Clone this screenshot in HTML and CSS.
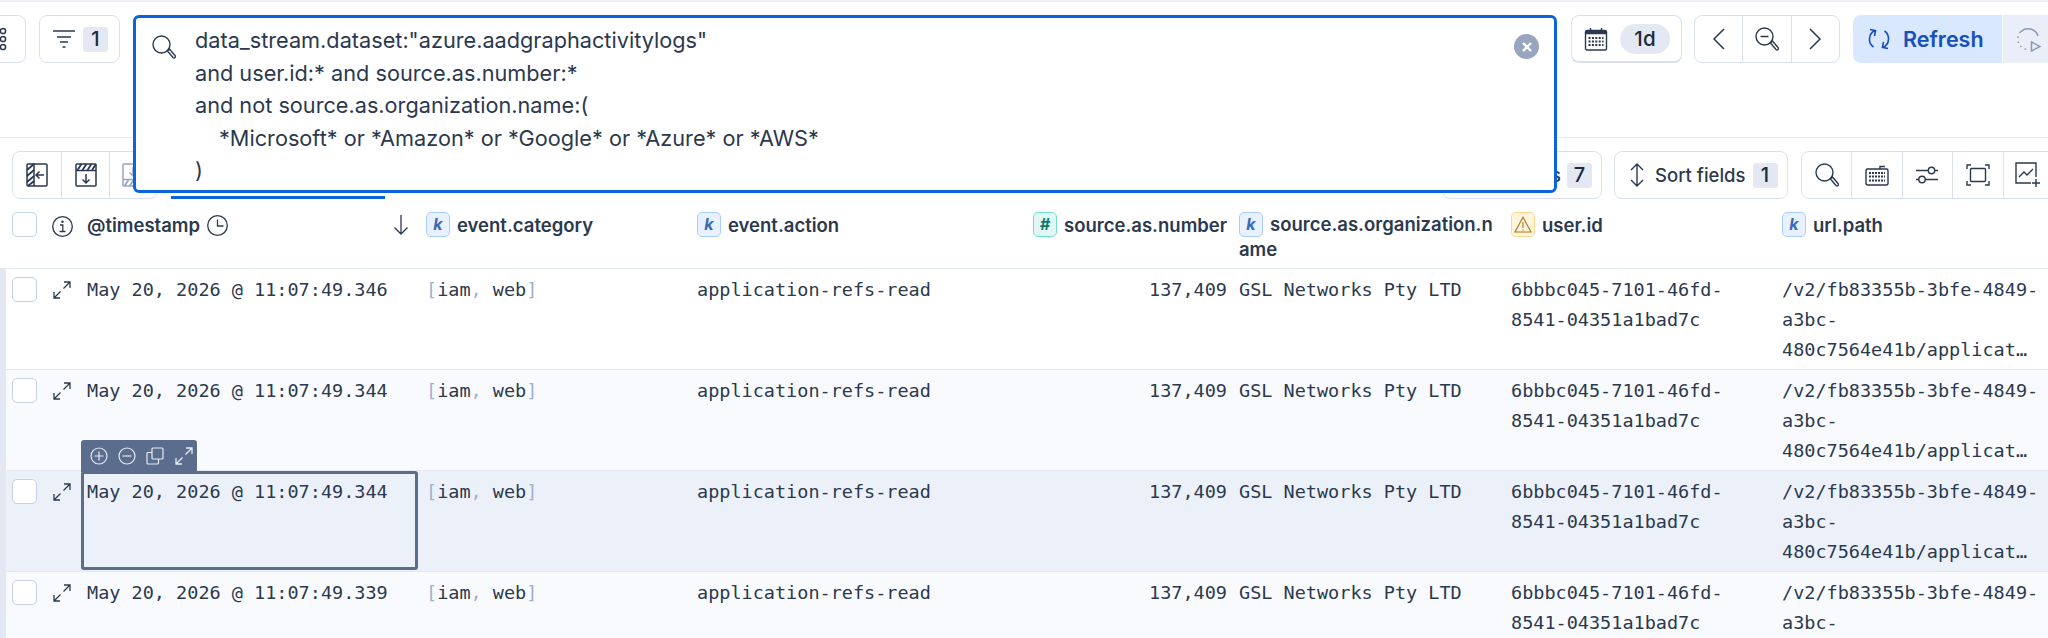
FILE: index.html
```html
<!DOCTYPE html>
<html lang="en">
<head>
    <meta charset="UTF-8">
    <title>Discover</title>
    <link rel="stylesheet" href="styles.css">
</head>
<body>
    <svg class="defs" width="0" height="0">
        <symbol id="expand" viewBox="0 0 18 18"><path d="M11 1h6v6M17 1l-6.500 6.500M1 11v6h6M1 17l6.500-6.500" fill="none" stroke="currentColor" stroke-width="1.3"/></symbol>
        <symbol id="search" viewBox="0 0 24 24"><circle cx="9.5" cy="9.5" r="8.500" fill="none" stroke="#2b394f" stroke-width="1.4"/><path d="m15.500 16 2-2 5.500 6.500a1.300 1.300 0 0 1-2 2z" fill="none" stroke="#2b394f" stroke-width="1.4"/></symbol>
    </svg>

    <div class="top-strip"></div>

    <div class="topbar">
        <div class="btn btn-group-cut">
            <svg width="12" height="26" viewBox="0 0 12 26" fill="none" stroke="#2b394f" stroke-width="1.5"><circle cx="3" cy="5" r="2.6"/><circle cx="3" cy="13" r="2.6"/><circle cx="3" cy="21" r="2.6"/></svg>
        </div>
        <div class="btn btn-filter">
            <svg width="22" height="20" viewBox="0 0 22 20" fill="none" stroke="#2b394f" stroke-width="1.4"><path d="M0 2h22M4 8h14M7 13h8M9.500 18h3"/></svg>
            <span class="count count-lg">1</span>
        </div>
        <div class="query-slot">
            <div class="query">
                <svg class="query-icon" width="24" height="24"><use href="#search"/></svg>
                <div class="query-text">
                    <div>data_stream.dataset:"azure.aadgraphactivitylogs"</div>
                    <div>and user.id:* and source.as.number:*</div>
                    <div>and not source.as.organization.name:(</div>
                    <div class="indent">*Microsoft* or *Amazon* or *Google* or *Azure* or *AWS*</div>
                    <div>)</div>
                </div>
                <span class="clear">
                    <svg width="12" height="12" viewBox="0 0 12 12" stroke="#fff" stroke-width="2.4"><path d="m2 2 8 8M10 2l-8 8"/></svg>
                </span>
            </div>
        </div>
        <div class="btn btn-date">
            <svg width="24" height="24" viewBox="0 0 24 24" fill="none" stroke="#2b394f" stroke-width="1.4"><rect x="1.500" y="3.500" width="21" height="19.500" rx="1.500"/><path d="M1.500 5.500h21" stroke-width="3.5"/><path d="M6.500 1v4M17.500 1v4"/><path d="M4.500 11h15M4.500 14.500h15M4.500 18h15" stroke-width="1.9" stroke-dasharray="2 1.4"/></svg>
            <span class="pill">1d</span>
        </div>
        <div class="btn-group nav-group">
            <span class="cell"><svg width="14" height="24" viewBox="0 0 14 24" fill="none" stroke="#2b394f" stroke-width="1.5"><path d="M12 2 2 12l10 10"/></svg></span>
            <span class="cell"><svg width="24" height="24" viewBox="0 0 24 24" fill="none" stroke="#2b394f" stroke-width="1.4"><circle cx="9.500" cy="9.500" r="8.500"/><path d="M5.500 9.500h8M15.500 16l2-2 5.500 6.500a1.300 1.300 0 0 1-2 2z"/></svg></span>
            <span class="cell"><svg width="14" height="24" viewBox="0 0 14 24" fill="none" stroke="#2b394f" stroke-width="1.5"><path d="m2 2 10 10L2 22"/></svg></span>
        </div>
        <div class="refresh">
            <div class="refresh-main">
                <svg width="22" height="22" viewBox="0 0 22 22" fill="none" stroke="#1750ba" stroke-width="1.6"><path d="M7 2.600A9.500 9.500 0 0 0 5.500 19M2 1.500l5.500 1.200L6.500 8"/><path d="M15 19.400A9.500 9.500 0 0 0 16.500 3M20 20.500l-5.500-1.200 1-5.300"/></svg>
                <span>Refresh</span>
            </div>
            <div class="refresh-auto">
                <svg width="26" height="26" viewBox="0 0 26 26" fill="none" stroke="#8a9bb8" stroke-width="1.5"><path d="M5.500 6A10.500 10.500 0 0 1 23 10"/><path d="M5.500 6A10.500 10.500 0 0 0 14 23.500" stroke-dasharray="1.5 3.5"/><path d="M16.500 16l8.500 4.500-8.500 4.500z"/></svg>
            </div>
        </div>
    </div>

    <div class="toolbar">
        <div class="btn-group layout-group">
            <span class="cell"><svg width="22" height="24" viewBox="0 0 22 24" fill="none" stroke="#2b394f" stroke-width="1.5"><rect x="1" y="1" width="20" height="22" rx="1"/><path d="M8 1v22M18 12h-8M13.500 8.500 10 12l3.500 3.500"/><path d="M1 7l7-6M1 13 8 7M1 19 8 13M2 23l6-5" stroke-width="1.8"/></svg></span>
            <span class="cell"><svg width="22" height="24" viewBox="0 0 22 24" fill="none" stroke="#2b394f" stroke-width="1.5"><rect x="1" y="1" width="20" height="22" rx="1"/><path d="M1 7.500h20M11 11v9M7.500 16.500 11 20l3.500-3.500"/><path d="M2.500 7l4-6M7.500 7l4-6M12.500 7l4-6M17 7l4-6" stroke-width="1.8"/></svg></span>
            <span class="cell cell-muted"><svg width="22" height="24" viewBox="0 0 22 24" fill="none" stroke="#98a5bf" stroke-width="1.5"><rect x="1" y="1" width="20" height="22" rx="1"/><path d="M1 16.500h20M11 4v9M7.500 9.500 11 13l3.500-3.500"/><path d="M2.500 23l4-6M7.500 23l4-6M12.500 23l4-6M17 23l4-6" stroke-width="1.8"/></svg></span>
        </div>
        <div class="tab"></div>
        <div class="btn btn-text btn-columns">
            <span>Columns</span>
            <span class="count">7</span>
        </div>
        <div class="btn btn-text btn-sort">
            <svg width="16" height="26" viewBox="0 0 16 26" fill="none" stroke="#2b394f" stroke-width="1.4"><path d="M8 2v22M2 8l6-6 6 6M2 18l6 6 6-6"/></svg>
            <span>Sort fields</span>
            <span class="count">1</span>
        </div>
        <div class="btn-group tools-group">
            <span class="cell"><svg width="24" height="24"><use href="#search"/></svg></span>
            <span class="cell"><svg width="24" height="22" viewBox="0 0 24 22" fill="none" stroke="#2b394f" stroke-width="1.4"><rect x="1" y="5" width="22" height="16" rx="1.500"/><path d="M4 9h16M4 12.500h16M4 16.500h16" stroke-width="2.2" stroke-dasharray="2 1"/><path d="M15 5V2.500h5"/></svg></span>
            <span class="cell"><svg width="24" height="20" viewBox="0 0 24 20" fill="none" stroke="#2b394f" stroke-width="1.4"><path d="M1 5.500h12M20 5.500h3M1 14.500h3M10 14.500h13"/><circle cx="16.500" cy="5.500" r="3.200"/><circle cx="7" cy="14.500" r="3.200"/></svg></span>
            <span class="cell"><svg width="24" height="22" viewBox="0 0 24 22" fill="none" stroke="#2b394f" stroke-width="1.4"><path d="M5 1H1v4M19 1h4v4M5 21H1v-4M19 21h4v-4"/><rect x="4.500" y="4.500" width="15" height="13" rx="1"/></svg></span>
            <span class="cell"><svg width="26" height="26" viewBox="0 0 26 26" fill="none" stroke="#2b394f" stroke-width="1.4"><path d="M16 21H1V1h20v14"/><path d="m4 15 5-5 3 3 6-6"/><path d="M21 17v8M17 21h8"/></svg></span>
        </div>
    </div>

    <div class="grid-head">
        <div class="h-check"><span class="checkbox"></span></div>
        <div class="h-info"><svg width="21" height="21" viewBox="0 0 21 21" fill="none" stroke="#2b394f" stroke-width="1.3"><circle cx="10.500" cy="10.500" r="9.800"/><path d="M8 9h2.800v6M7.500 15.500h6"/><circle cx="10.500" cy="5.800" r=".6"/></svg></div>
        <div class="h-cell h-time">
            <span>@timestamp</span>
            <svg width="21" height="21" viewBox="0 0 21 21" fill="none" stroke="#2b394f" stroke-width="1.3"><circle cx="10.500" cy="10.500" r="9.800"/><path d="M10.500 4.500v6.500h6"/></svg>
            <svg class="sort-arrow" width="16" height="21" viewBox="0 0 16 21" fill="none" stroke="#2b394f" stroke-width="1.3"><path d="M8 1v19M1.500 13.500 8 20l6.500-6.500"/></svg>
        </div>
        <div class="h-cell"><i class="tk tk-k">k</i><span>event.category</span></div>
        <div class="h-cell"><i class="tk tk-k">k</i><span>event.action</span></div>
        <div class="h-cell"><i class="tk tk-n">#</i><span>source.as.number</span></div>
        <div class="h-cell h-wrap"><i class="tk tk-k">k</i>source.as.organization.name</div>
        <div class="h-cell"><i class="tk tk-w"><svg width="18" height="17" viewBox="0 0 18 17" fill="none" stroke="#a87920" stroke-width="1.1"><path d="M9 1.200 17 16H1z"/><path d="M9 6v6M9 13.300v1.200"/></svg></i><span>user.id</span></div>
        <div class="h-cell"><i class="tk tk-k">k</i><span>url.path</span></div>
    </div>

    <div class="grid-body">
        <div class="row">
            <div class="c-check"><span class="checkbox"></span></div>
            <div class="c-expand"><svg width="18" height="18"><use href="#expand"/></svg></div>
            <div class="cell-txt">May 20, 2026 @ 11:07:49.346</div>
            <div class="cell-txt"><b>[</b>iam<b>,</b> web<b>]</b></div>
            <div class="cell-txt">application-refs-read</div>
            <div class="cell-txt num">137,409</div>
            <div class="cell-txt">GSL Networks Pty LTD</div>
            <div class="cell-txt">6bbbc045-7101-46fd-<br>8541-04351a1bad7c</div>
            <div class="cell-txt">/v2/fb83355b-3bfe-4849-<br>a3bc-<br>480c7564e41b/applicat…</div>
        </div>
        <div class="row striped">
            <div class="c-check"><span class="checkbox"></span></div>
            <div class="c-expand"><svg width="18" height="18"><use href="#expand"/></svg></div>
            <div class="cell-txt">May 20, 2026 @ 11:07:49.344</div>
            <div class="cell-txt"><b>[</b>iam<b>,</b> web<b>]</b></div>
            <div class="cell-txt">application-refs-read</div>
            <div class="cell-txt num">137,409</div>
            <div class="cell-txt">GSL Networks Pty LTD</div>
            <div class="cell-txt">6bbbc045-7101-46fd-<br>8541-04351a1bad7c</div>
            <div class="cell-txt">/v2/fb83355b-3bfe-4849-<br>a3bc-<br>480c7564e41b/applicat…</div>
        </div>
        <div class="row hovered">
            <div class="c-check"><span class="checkbox"></span></div>
            <div class="c-expand"><svg width="18" height="18"><use href="#expand"/></svg></div>
            <div class="cell-txt focused">
                May 20, 2026 @ 11:07:49.344
                <div class="cell-pop">
                    <svg width="20" height="20" viewBox="0 0 20 20" fill="none" stroke="#e6ebf5" stroke-width="1.2"><circle cx="10" cy="10" r="8"/><path d="M10 5.500v9M5.500 10h9"/></svg>
                    <svg width="20" height="20" viewBox="0 0 20 20" fill="none" stroke="#e6ebf5" stroke-width="1.2"><circle cx="10" cy="10" r="8"/><path d="M5.500 10h9"/></svg>
                    <svg width="20" height="20" viewBox="0 0 20 20" fill="none" stroke="#e6ebf5" stroke-width="1.2"><rect x="7" y="2" width="11" height="11" rx="1"/><path d="M7 6.500H3a1 1 0 0 0-1 1V17a1 1 0 0 0 1 1h9.500a1 1 0 0 0 1-1v-4"/></svg>
                    <svg class="pop-expand" width="18" height="18"><use href="#expand"/></svg>
                </div>
            </div>
            <div class="cell-txt"><b>[</b>iam<b>,</b> web<b>]</b></div>
            <div class="cell-txt">application-refs-read</div>
            <div class="cell-txt num">137,409</div>
            <div class="cell-txt">GSL Networks Pty LTD</div>
            <div class="cell-txt">6bbbc045-7101-46fd-<br>8541-04351a1bad7c</div>
            <div class="cell-txt">/v2/fb83355b-3bfe-4849-<br>a3bc-<br>480c7564e41b/applicat…</div>
        </div>
        <div class="row striped">
            <div class="c-check"><span class="checkbox"></span></div>
            <div class="c-expand"><svg width="18" height="18"><use href="#expand"/></svg></div>
            <div class="cell-txt">May 20, 2026 @ 11:07:49.339</div>
            <div class="cell-txt"><b>[</b>iam<b>,</b> web<b>]</b></div>
            <div class="cell-txt">application-refs-read</div>
            <div class="cell-txt num">137,409</div>
            <div class="cell-txt">GSL Networks Pty LTD</div>
            <div class="cell-txt">6bbbc045-7101-46fd-<br>8541-04351a1bad7c</div>
            <div class="cell-txt">/v2/fb83355b-3bfe-4849-<br>a3bc-</div>
        </div>
    </div>
</body>
</html>
```

FILE: styles.css
```css
html, body { margin: 0; padding: 0; height: 638px; overflow: hidden; }
body { font-family: 'Inter', 'Liberation Sans', sans-serif; font-size: 18.5px; color: #1d2a3e; background: white; }
.defs { position: absolute; }
.top-strip { height: 2px; background: #eef1f8; }

/* top bar */
.topbar { display: flex; gap: 13px; height: 48px; margin: 13px -40px 0 -30px; }
.btn { display: flex; align-items: center; box-sizing: border-box; height: 48px; background: white; border: 1px solid #d9e0ed; border-radius: 8px; flex: none; }
.btn-group-cut { width: 56px; justify-content: flex-end; padding-right: 13px; }
.btn-filter { width: 81px; padding-left: 13px; gap: 8px; }
.count { display: inline-block; box-sizing: border-box; width: 25px; height: 25px; line-height: 25px; text-align: center; background: #e3e8f2; border-radius: 3px; font-weight: 500; font-size: 20px; color: #1d2a3e; }
.query-slot { flex: 1; position: relative; min-width: 0; margin-right: 1px; }
.query { position: absolute; z-index: 5; left: 0; right: 0; top: 0; height: 178px; box-sizing: border-box; background: white; border: 3px solid #0b64dd; border-radius: 6px; }
.query-icon { position: absolute; left: 16px; top: 17px; }
.query-text { position: absolute; left: 59px; top: 6px; font-size: 21.7px; line-height: 32.6px; color: #2b394f; white-space: nowrap; }
.indent { padding-left: 24px; }
.clear { position: absolute; right: 15px; top: 16px; width: 25px; height: 25px; border-radius: 50%; background: #98a5bf; display: flex; align-items: center; justify-content: center; }
.btn-date { width: 111px; padding-left: 12px; gap: 12px; border-bottom-width: 2px; }
.pill { display: inline-block; width: 50px; height: 30px; line-height: 30px; text-align: center; border-radius: 15px; background: #e3e8f2; font-weight: 500; font-size: 20.6px; }

.btn-group { display: flex; box-sizing: border-box; height: 48px; border: 1px solid #d9e0ed; border-radius: 8px; flex: none; background: white; }
.btn-group .cell { display: flex; align-items: center; justify-content: center; border-left: 1px solid #d9e0ed; box-sizing: border-box; flex: 1 1 0; }
.btn-group .cell:first-child { border-left: none; }
.nav-group { width: 146px; margin-left: -1px; }

.refresh { display: flex; flex: none; width: 235px; height: 48px; border-radius: 8px; overflow: hidden; }
.refresh-main { width: 149px; display: flex; align-items: center; gap: 13px; padding-left: 15px; box-sizing: border-box; background: #d9e8ff; color: #1750ba; font-weight: 600; font-size: 21.5px; }
.refresh-auto { flex: 1; background: #e9eef8; border-left: 1px solid #f8fafd; padding: 11px 0 0 12px; }

/* second bar */
.toolbar { display: flex; height: 48px; margin: 74px -40px 0 0; padding: 13px 0 0 12px; border-top: 1px solid #e3e8f2; position: relative; align-items: stretch; }
.layout-group { width: 146px; }
.layout-group .cell { flex: 0 0 48px; }
.btn-group .cell-muted { justify-content: flex-start; padding-left: 12px; }
.tab { align-self: flex-end; width: 214px; height: 3px; margin-left: 13px; background: #0b64dd; }
.btn-text { gap: 10px; color: #2b394f; font-weight: 500; }
.btn-columns { margin-left: auto; width: 160px; justify-content: flex-end; padding-right: 9px; gap: 6px; }
.btn-sort { width: 174px; margin-left: 12px; padding-left: 14px; }
.btn-sort .count { margin-left: -3px; }
.tools-group { width: 287px; margin-left: 13px; }
.tools-group .cell { flex: none; width: 50.5px; }
.tools-group .cell:first-child { width: 49px; }

/* grid */
.grid-head, .row { display: grid; grid-template-columns: 44px 37px 339px 271px 336px 206px 272px 271px 272px; }
.grid-head { height: 70px; box-sizing: border-box; padding-top: 13px; border-bottom: 1px solid #e3e8f2; font-weight: 600; color: #2b394f; line-height: 25px; }
.h-check, .c-check { padding-left: 12px; }
.h-info { padding: 4px 0 0 8px; }
.h-cell { display: flex; gap: 7px; padding-left: 6px; min-width: 0; }
.h-cell > span { margin-top: 1px; }
.h-time { position: relative; }
.h-time svg { margin-top: 3px; }
.h-time .sort-arrow { position: absolute; left: 312px; top: 2px; margin: 0; }
.h-wrap { display: block; word-break: break-all; padding-right: 6px; }
.h-wrap .tk { margin-right: 7px; vertical-align: top; }

.checkbox { display: block; box-sizing: border-box; width: 25px; height: 25px; background: white; border: 1px solid #c5d0e4; border-radius: 5px; }
.tk { display: inline-flex; align-items: center; justify-content: center; box-sizing: border-box; width: 24px; height: 25px; flex: none; border-radius: 5px; border: 1px solid; font-size: 16px; font-weight: 700; font-style: italic; }
.tk-k { background: #e8f1ff; border-color: #a9cdff; color: #3a6bb5; }
.tk-n { background: #e0f7f4; border-color: #6fe0d3; color: #11786f; }
.tk-w { background: #fff4dc; border-color: #fbd78c; }

.grid-body { border-left: 6px solid #e3e8f2; }
.row { height: 101px; box-sizing: border-box; margin-left: -6px; border-bottom: 1px solid #e3e8f2; background: white; position: relative; box-shadow: inset 6px 0 0 #e3e8f2; }
.row.striped { background: #f8fafd; }
.row.hovered { background: #ecf1f9; }
.c-check { padding-top: 8px; }
.c-expand { padding: 12px 0 0 9px; color: #2b394f; }
.cell-txt { padding: 6px 6px 0; font-family: 'DejaVu Sans Mono', 'Liberation Mono', monospace; font-size: 18.5px; line-height: 30px; color: #2b394f; min-width: 0; white-space: nowrap; }
.cell-txt b { font-weight: 400; color: #a0b0cf; }
.num { text-align: right; }

.focused { position: relative; }
.focused::after { content: ""; position: absolute; left: 0; top: 0; width: 337px; height: 99px; box-sizing: border-box; border: 3px solid #5a6d8c; border-radius: 3px; }
.cell-pop { position: absolute; left: 0; top: -31px; width: 116px; height: 32px; box-sizing: border-box; display: flex; align-items: center; gap: 8px; padding-left: 8px; background: #5a6d8c; border-radius: 3px 3px 0 0; color: #e6ebf5; }
.pop-expand { margin-left: 2px; }
```
